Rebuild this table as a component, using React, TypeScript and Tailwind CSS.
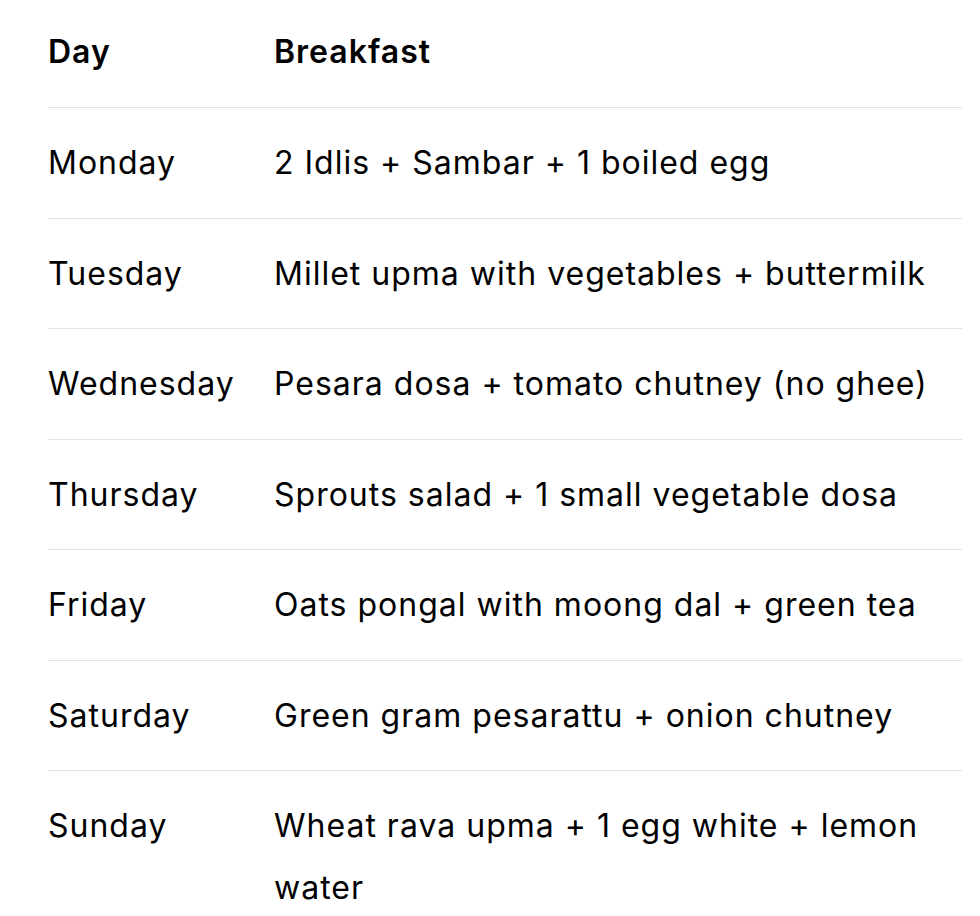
import React from "react";

const rows: [string, string][] = [
  ["Monday", "2 Idlis + Sambar + 1 boiled egg"],
  ["Tuesday", "Millet upma with vegetables + buttermilk"],
  ["Wednesday", "Pesara dosa + tomato chutney (no ghee)"],
  ["Thursday", "Sprouts salad + 1 small vegetable dosa"],
  ["Friday", "Oats pongal with moong dal + green tea"],
  ["Saturday", "Green gram pesarattu + onion chutney"],
  ["Sunday", "Wheat rava upma + 1 egg white + lemon water"],
];

export default function App() {
  return (
    <div
      className="w-[980px] h-[916px] overflow-hidden bg-white text-black text-[32px] leading-[62px] tracking-[1px]"
      style={{ fontFamily: "Inter, 'Noto Sans', sans-serif" }}
    >
      <div className="ml-[48px] w-[914px]">
        <div className="grid grid-cols-[226px_1fr] pt-[21px] pb-[24px] border-b border-[#e2e2e2] font-semibold">
          <div>Day</div>
          <div>Breakfast</div>
        </div>
        {rows.map(([d, b]) => (
          <div
            key={d}
            className="grid grid-cols-[226px_1fr] pt-[24px] pb-[23.5px] border-b border-[#e2e2e2]"
          >
            <div>{d}</div>
            <div className="pr-[30px]">{b}</div>
          </div>
        ))}
      </div>
    </div>
  );
}
